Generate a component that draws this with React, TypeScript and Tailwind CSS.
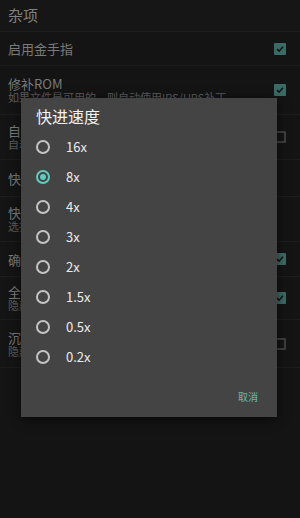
import React from "react";

const font = { fontFamily: '"Noto Sans CJK SC", "Noto Sans", sans-serif' };

type Row = { title: string; sub?: string; h: string; check?: "on" | "off" | "none" };

const rows: Row[] = [
  { title: "启用金手指", h: "h-[34px]", check: "on" },
  { title: "修补ROM", sub: "如果文件是可用的，则自动使用IPS/UPS补丁", h: "h-[49px]", check: "on" },
  { title: "自动存档", sub: "自动保存游戏进度", h: "h-[45px]", check: "off" },
  { title: "快进速度", h: "h-[37px]", check: "none" },
  { title: "快进模式", sub: "选择快进方式", h: "h-[45px]", check: "none" },
  { title: "确认退出", h: "h-[35px]", check: "on" },
  { title: "全屏", sub: "隐藏状态栏", h: "h-[43px]", check: "on" },
  { title: "沉浸模式", sub: "隐藏导航栏", h: "h-[48px]", check: "off" },
];

const speeds = ["16x", "8x", "4x", "3x", "2x", "1.5x", "0.5x", "0.2x"];

function Check({ state }: { state: Row["check"] }) {
  if (state === "none") return null;
  if (state === "off")
    return <div className="w-[12px] h-[12px] border-2 border-[#3e3e3e] rounded-[1px]" />;
  return (
    <div className="w-[12px] h-[12px] bg-[#3b6b66] rounded-[1px] flex items-center justify-center">
      <svg width="10" height="10" viewBox="0 0 10 10">
        <path d="M2 5.2 L4.1 7.2 L8 2.8" stroke="#141414" strokeWidth="1.6" fill="none" />
      </svg>
    </div>
  );
}

export default function App() {
  return (
    <div className="relative w-[300px] h-[518px] bg-[#141414] overflow-hidden" style={font}>
      <div className="h-[32px] bg-[#161616] flex items-center px-[8px] text-[15px] text-[#808080] border-b border-[#1d1d1d]">
        杂项
      </div>
      {rows.map((r, i) => (
        <div
          key={i}
          className={`${r.h} flex items-center justify-between pl-[8px] pr-[14px] border-b border-[#1d1d1d]`}
        >
          <div className="flex flex-col">
            <div className="text-[13px] leading-[15px] text-[#7a7a7a]">{r.title}</div>
            {r.sub && <div className="text-[11px] leading-[13px] text-[#5c5c5c]">{r.sub}</div>}
          </div>
          <Check state={r.check} />
        </div>
      ))}

      <div className="absolute left-[21px] top-[98px] w-[256px] h-[319px] bg-[#444444] shadow-[0_2px_10px_rgba(0,0,0,0.6)] flex flex-col">
        <div className="pt-[8px] pb-[6px] pl-[15px] text-[16px] leading-[20px] text-[#f2f2f2]">快进速度</div>
        {speeds.map((s, i) => (
          <div key={s} className="h-[30px] flex items-center pl-[15px]">
            {i === 1 ? (
              <div className="w-[14px] h-[14px] rounded-full border-2 border-[#63cbbd] flex items-center justify-center">
                <div className="w-[6px] h-[6px] rounded-full bg-[#63cbbd]" />
              </div>
            ) : (
              <div className="w-[14px] h-[14px] rounded-full border-2 border-[#c4c4c4]" />
            )}
            <div className="ml-[16px] text-[13px] text-[#ececec]">{s}</div>
          </div>
        ))}
        <div className="flex justify-end pr-[19px] pt-[18px]">
          <div className="text-[10px] leading-[14px] text-[#6cb8ac]">取消</div>
        </div>
      </div>
    </div>
  );
}
